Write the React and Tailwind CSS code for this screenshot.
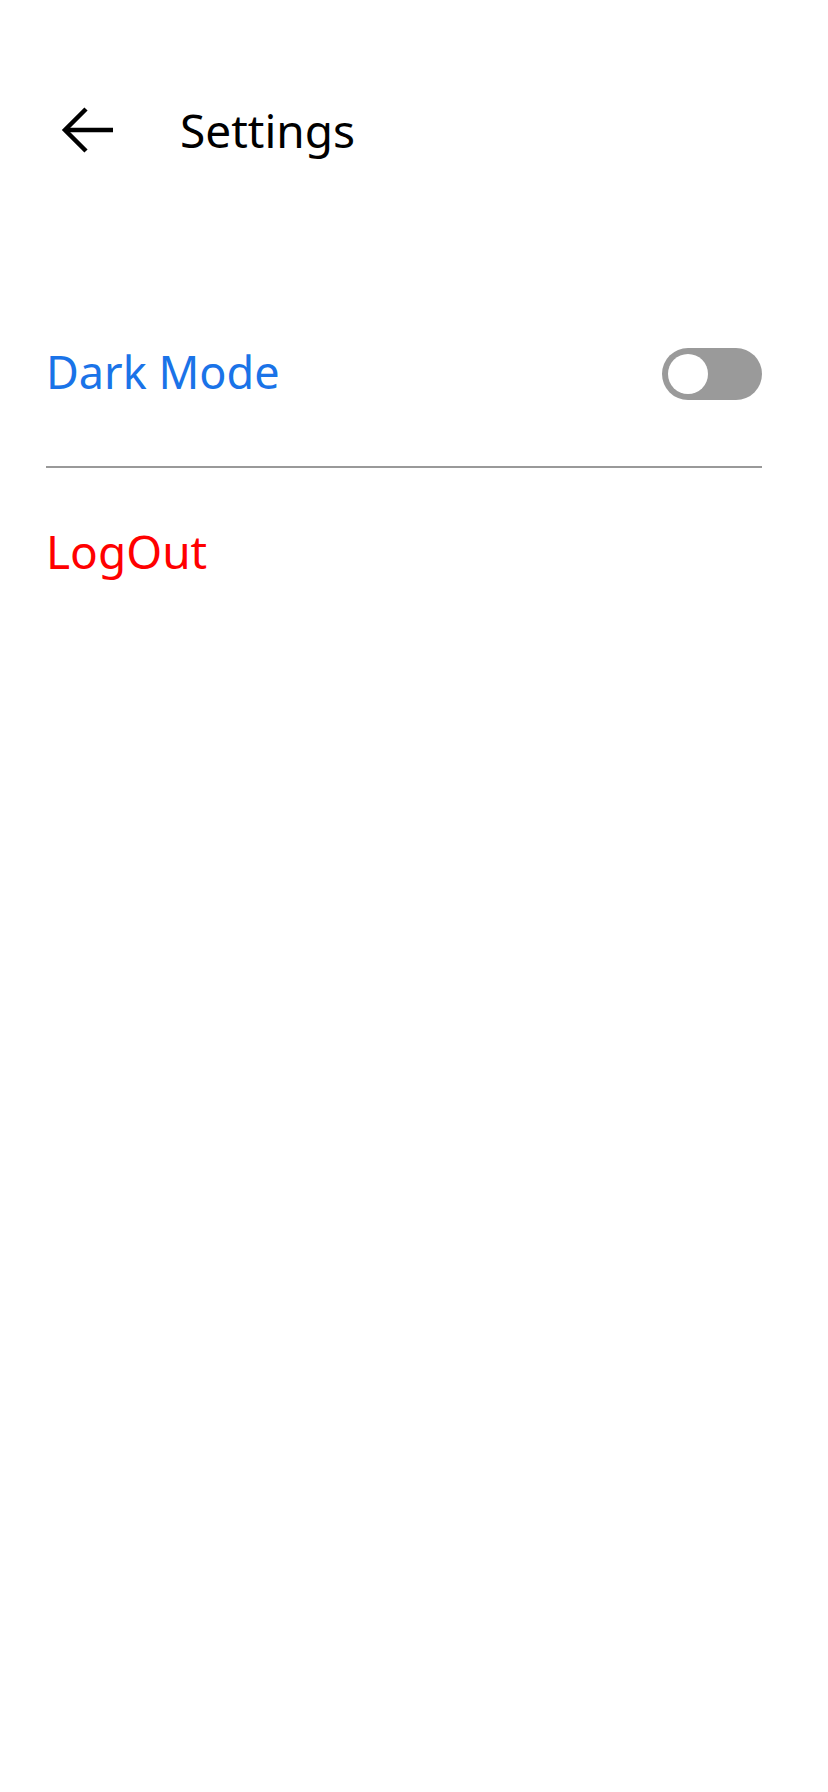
import React from 'react'

const App = () => {
  return (
    <main className="w-[828px] h-[1792px] bg-white flex flex-col" style={{ fontFamily: '"Noto Sans", sans-serif' }}>
      {/* Header */}
      <div className="flex flex-row items-center h-[100px] mt-[80px]">
        <svg className="ml-[61px]" width="54" height="48" viewBox="0 0 54 48" fill="none" stroke="#000" strokeWidth="4.5">
          <path d="M52 24H5" />
          <path d="M25 3L4 24l21 21" />
        </svg>
        <h1 className="ml-[65px] text-[46px] text-black leading-none">Settings</h1>
      </div>
      {/* Dark mode row */}
      <div className="flex flex-row items-center justify-between ml-[46px] mr-[66px] mt-[168px] h-[52px]">
        <p className="text-[45px] text-[#1a73e8] leading-none mb-[6px]">Dark Mode</p>
        <div className="w-[100px] h-[52px] rounded-full bg-[#9a9a9a] flex items-center px-[6px]">
          <div className="w-[40px] h-[40px] rounded-full bg-white" />
        </div>
      </div>
      <div className="ml-[46px] mr-[66px] mt-[66px] h-[2px] bg-[#999999]" />
      <p className="mx-[46px] mt-[60px] text-[46px] text-[#ff0000] leading-none">LogOut</p>
    </main>
  )
}

export default App
